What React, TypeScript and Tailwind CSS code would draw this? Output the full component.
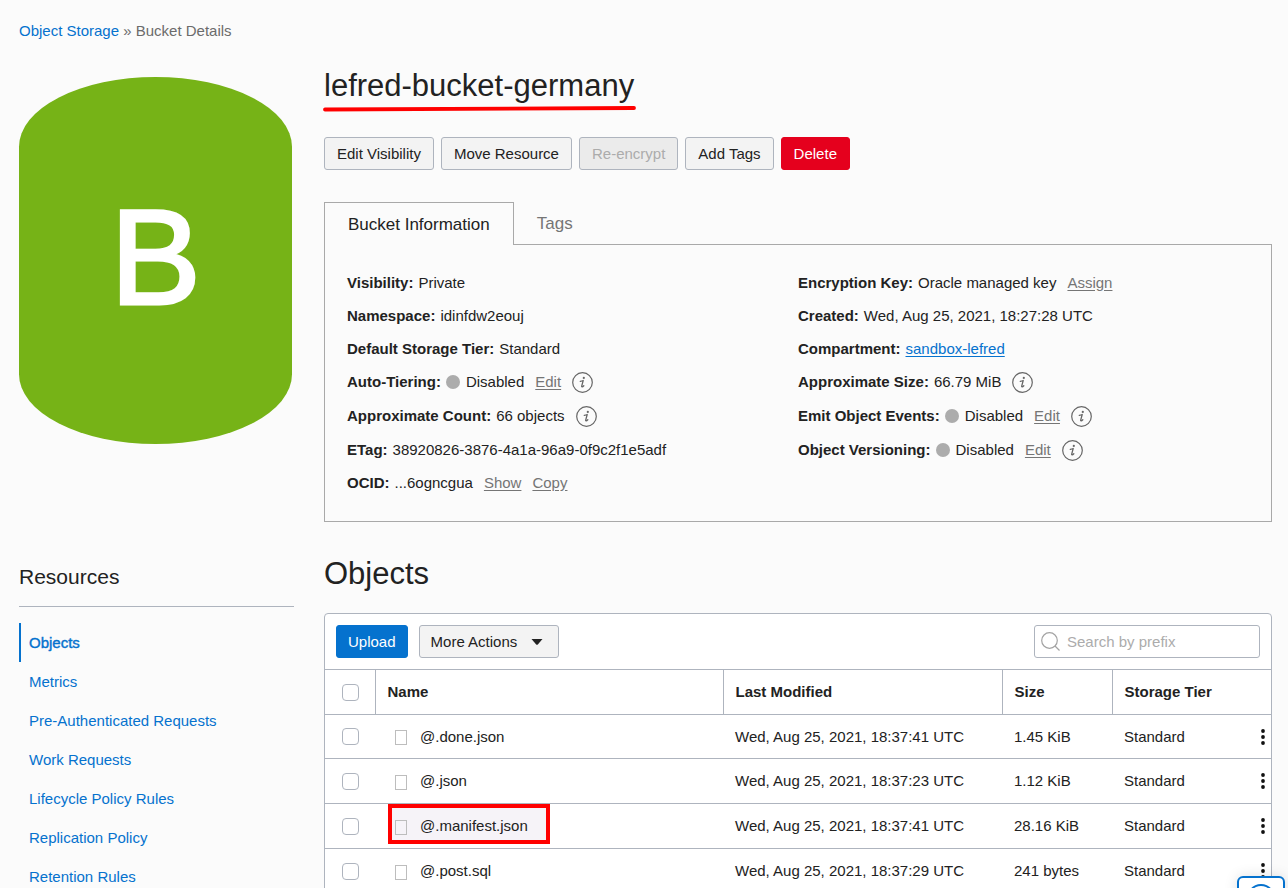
import type { ReactNode } from 'react';

const resources = [
  'Objects',
  'Metrics',
  'Pre-Authenticated Requests',
  'Work Requests',
  'Lifecycle Policy Rules',
  'Replication Policy',
  'Retention Rules',
];

const objects = [
  { name: '@.done.json', modified: 'Wed, Aug 25, 2021, 18:37:41 UTC', size: '1.45 KiB', tier: 'Standard' },
  { name: '@.json', modified: 'Wed, Aug 25, 2021, 18:37:23 UTC', size: '1.12 KiB', tier: 'Standard' },
  { name: '@.manifest.json', modified: 'Wed, Aug 25, 2021, 18:37:41 UTC', size: '28.16 KiB', tier: 'Standard', marked: true },
  { name: '@.post.sql', modified: 'Wed, Aug 25, 2021, 18:37:29 UTC', size: '241 bytes', tier: 'Standard' },
];

const button = 'h-[33px] rounded-[3px] border whitespace-nowrap';
const plainButton = `${button} border-[#aeb4be] bg-[#f3f3f3]`;

function InfoIcon() {
  return (
    <button aria-label="More information" className="ml-[11px] shrink-0">
      <svg width="21" height="21" viewBox="0 0 21 21" className="block">
        <circle cx="10.5" cy="10.5" r="9.8" fill="none" stroke="#666" strokeWidth="1.2" />
        <circle cx="11.8" cy="5.9" r="1.1" fill="#666" />
        <path d="M8.300 9.400q1.600-.4 2.900-.9l-1.500 5.600c-.3 1.300.8 1 2.100-.3" fill="none" stroke="#666" strokeWidth="1.300" strokeLinecap="round" strokeLinejoin="round" />
      </svg>
    </button>
  );
}

function ActionLink({ children }: { children: ReactNode }) {
  return (
    <a href="#" className="ml-[11px] text-[#757575] underline underline-offset-2">
      {children}
    </a>
  );
}

function Disabled() {
  return (
    <>
      <span className="mr-[6px] size-[14px] rounded-full bg-[#acacac]" />
      Disabled
    </>
  );
}

function Field({ label, tall, children }: { label: string; tall?: boolean; children: ReactNode }) {
  return (
    <div className={`flex items-center ${tall ? 'h-[34px]' : 'h-[33px]'}`}>
      <dt className="mr-[5px] font-bold whitespace-nowrap">{label}:</dt>
      <dd className="flex items-center whitespace-nowrap">{children}</dd>
    </div>
  );
}

function Checkbox({ label }: { label: string }) {
  return (
    <input
      type="checkbox"
      aria-label={label}
      className="ml-[17px] block size-[17px] appearance-none rounded-[4px] border border-[#aeb4be] bg-white checked:bg-[#0572ce]"
    />
  );
}

function Sidebar() {
  return (
    <aside className="w-[275px] shrink-0">
      <div className="mt-[35px] flex h-[367px] w-[273px] items-center justify-center rounded-[50%/19%] bg-[#76b317] pb-2">
        <span className="text-[136px] leading-none text-white [-webkit-text-stroke:3px_white]">B</span>
      </div>
      <h2 className="mt-[118px] border-b border-[#aeb4be] pb-[14px] text-[21px] leading-[30px]">Resources</h2>
      <nav className="mt-4">
        <ul>
          {resources.map((item, i) => (
            <li key={item}>
              <a
                href="#"
                className={`flex h-[39px] items-center text-[#0572ce] ${
                  i === 0 ? 'border-l-2 border-[#0572ce] pl-2 [-webkit-text-stroke:0.4px_currentColor]' : 'pl-[10px]'
                }`}
              >
                {item}
              </a>
            </li>
          ))}
        </ul>
      </nav>
    </aside>
  );
}

function BucketInfo() {
  return (
    <section className="mt-8">
      <div role="tablist" className="flex">
        <button
          role="tab"
          aria-selected="true"
          className="h-[43px] border border-b-0 border-[#a9a9a9] px-[23px] pt-[2px] text-[17px]"
        >
          Bucket Information
        </button>
        <div className="flex-1 border-b border-[#a9a9a9]">
          <button role="tab" aria-selected="false" className="h-[42px] px-[23px] pt-[2px] text-[17px] text-[#757575]">
            Tags
          </button>
        </div>
      </div>
      <div className="grid h-[277px] grid-cols-2 border border-t-0 border-[#a9a9a9] px-[22px] pt-[21px]">
        <dl>
          <Field label="Visibility">Private</Field>
          <Field label="Namespace">idinfdw2eouj</Field>
          <Field label="Default Storage Tier">Standard</Field>
          <Field label="Auto-Tiering" tall>
            <Disabled />
            <ActionLink>Edit</ActionLink>
            <InfoIcon />
          </Field>
          <Field label="Approximate Count" tall>
            66 objects
            <InfoIcon />
          </Field>
          <Field label="ETag">38920826-3876-4a1a-96a9-0f9c2f1e5adf</Field>
          <Field label="OCID">
            ...6ogncgua
            <ActionLink>Show</ActionLink>
            <ActionLink>Copy</ActionLink>
          </Field>
        </dl>
        <dl>
          <Field label="Encryption Key">
            Oracle managed key
            <ActionLink>Assign</ActionLink>
          </Field>
          <Field label="Created">Wed, Aug 25, 2021, 18:27:28 UTC</Field>
          <Field label="Compartment">
            <a href="#" className="text-[#0572ce] underline underline-offset-2">
              sandbox-lefred
            </a>
          </Field>
          <Field label="Approximate Size" tall>
            66.79 MiB
            <InfoIcon />
          </Field>
          <Field label="Emit Object Events" tall>
            <Disabled />
            <ActionLink>Edit</ActionLink>
            <InfoIcon />
          </Field>
          <Field label="Object Versioning" tall>
            <Disabled />
            <ActionLink>Edit</ActionLink>
            <InfoIcon />
          </Field>
        </dl>
      </div>
    </section>
  );
}

function ObjectsTable() {
  const th = 'border-r border-[#aeb4be] pl-3 text-left font-bold last:border-r-0';

  return (
    <section className="mt-8">
      <h2 className="text-[31px] leading-10">Objects</h2>
      <div className="mt-[19px] rounded-t-[4px] border border-[#aeb4be] bg-white">
        <div className="flex gap-[11px] p-[11px]">
          <button className={`${button} border-[#0572ce] bg-[#0572ce] px-[11px] text-white`}>Upload</button>
          <button className={`${plainButton} flex items-center px-[11px]`}>
            More Actions
            <svg width="12" height="6" viewBox="0 0 12 6" className="mr-1 ml-[14px]">
              <path d="M0.500 0h11L6.800 5.400q-.8.700-1.600 0z" fill="#222" />
            </svg>
          </button>
          <div className="relative ml-auto">
            <svg width="19" height="19" viewBox="0 0 19 19" className="absolute top-[7px] left-[7px]" fill="none" stroke="#a3a3a3" strokeWidth="1.2">
              <circle cx="8.500" cy="8.500" r="7.800" />
              <path d="M14 14l4.500 4.500" />
            </svg>
            <input
              type="text"
              aria-label="Search by prefix"
              placeholder="Search by prefix"
              className="h-[33px] w-[226px] rounded-[3px] border border-[#aeb4be] bg-white pr-2 pl-8 outline-none placeholder:text-[#acacac]"
            />
          </div>
        </div>
        <table className="w-full table-fixed border-collapse">
          <thead>
            <tr className="h-[45px] border-y border-[#aeb4be]">
              <th className="w-[50px] border-r border-[#aeb4be]">
                <Checkbox label="Select all objects" />
              </th>
              <th className={th}>Name</th>
              <th className={`w-[279px] ${th}`}>Last Modified</th>
              <th className={`w-[110px] ${th}`}>Size</th>
              <th className={`w-[159px] ${th}`}>Storage Tier</th>
            </tr>
          </thead>
          <tbody>
            {objects.map((object) => (
              <tr key={object.name} className="h-[45px] border-b border-[#aeb4be] first:h-11">
                <td>
                  <Checkbox label={`Select ${object.name}`} />
                </td>
                <td className="pl-[13px]">
                  <div className="relative flex h-10 w-[162px] items-center pl-[7px]">
                    {object.marked && (
                      <span className="absolute inset-x-0 -top-0.5 h-10 border-4 border-[#ff0000] bg-[#f6f3f8]" />
                    )}
                    <span className="relative mt-[2px] h-[15px] w-3 border border-[#bdbdbd]" />
                    <span className="relative ml-[13px]">{object.name}</span>
                  </div>
                </td>
                <td className="pl-3">{object.modified}</td>
                <td className="pl-3">{object.size}</td>
                <td className="pl-3">
                  <div className="flex items-center justify-between">
                    {object.tier}
                    <button aria-label={`Actions for ${object.name}`} className="mr-[6px]">
                      <svg width="4" height="16" viewBox="0 0 4 16" className="block" fill="#111">
                        <circle cx="2" cy="2" r="1.900" />
                        <circle cx="2" cy="8" r="1.900" />
                        <circle cx="2" cy="14" r="1.900" />
                      </svg>
                    </button>
                  </div>
                </td>
              </tr>
            ))}
          </tbody>
        </table>
      </div>
    </section>
  );
}

export default function App() {
  return (
    <div className="h-screen overflow-hidden bg-[#fbfbfb] pt-5 pr-4 pl-[19px] font-['Liberation_Sans',Arial,sans-serif] text-[15px] leading-[22px] text-[#222]">
      <nav aria-label="Breadcrumb">
        <a href="#" className="text-[#0572ce]">Object Storage</a>
        <span className="text-[#6b6b6b]"> » Bucket Details</span>
      </nav>

      <div className="flex gap-[30px]">
        <Sidebar />
        <main className="min-w-0 flex-1 pt-6">
          <div className="relative">
            <h1 className="text-[31px] leading-10">lefred-bucket-germany</h1>
            <svg width="316" height="8" viewBox="0 0 316 8" className="absolute top-[39px] -left-[2px]">
              <path d="M3 4.500L312 3" stroke="#ff0000" strokeWidth="3.800" strokeLinecap="round" />
            </svg>
          </div>
          <div className="mt-[31px] flex gap-[7px]">
            <button className={`${plainButton} px-3`}>Edit Visibility</button>
            <button className={`${plainButton} px-3`}>Move Resource</button>
            <button disabled className={`${button} border-[#aeb4be] bg-[#ebebeb] px-3 text-[#acacac]`}>Re-encrypt</button>
            <button className={`${plainButton} px-3`}>Add Tags</button>
            <button className={`${button} border-[#e5001d] bg-[#e5001d] px-3 text-white`}>Delete</button>
          </div>
          <BucketInfo />
          <ObjectsTable />
        </main>
      </div>

      {/* Floating help button, peeking over the bottom edge */}
      <button
        aria-label="Help"
        className="fixed right-[3px] -bottom-9 flex h-12 w-12 justify-center rounded-[6px] border-2 border-[#0572ce] bg-white pt-[6px] shadow-[0_0_14px_rgba(0,0,0,0.12)]"
      >
        <svg width="32" height="32" viewBox="0 0 32 32" fill="none" stroke="#0572ce" strokeWidth="2">
          <ellipse cx="16" cy="16" rx="14" ry="15" />
          <circle cx="16" cy="16" r="7" />
        </svg>
      </button>
    </div>
  );
}
